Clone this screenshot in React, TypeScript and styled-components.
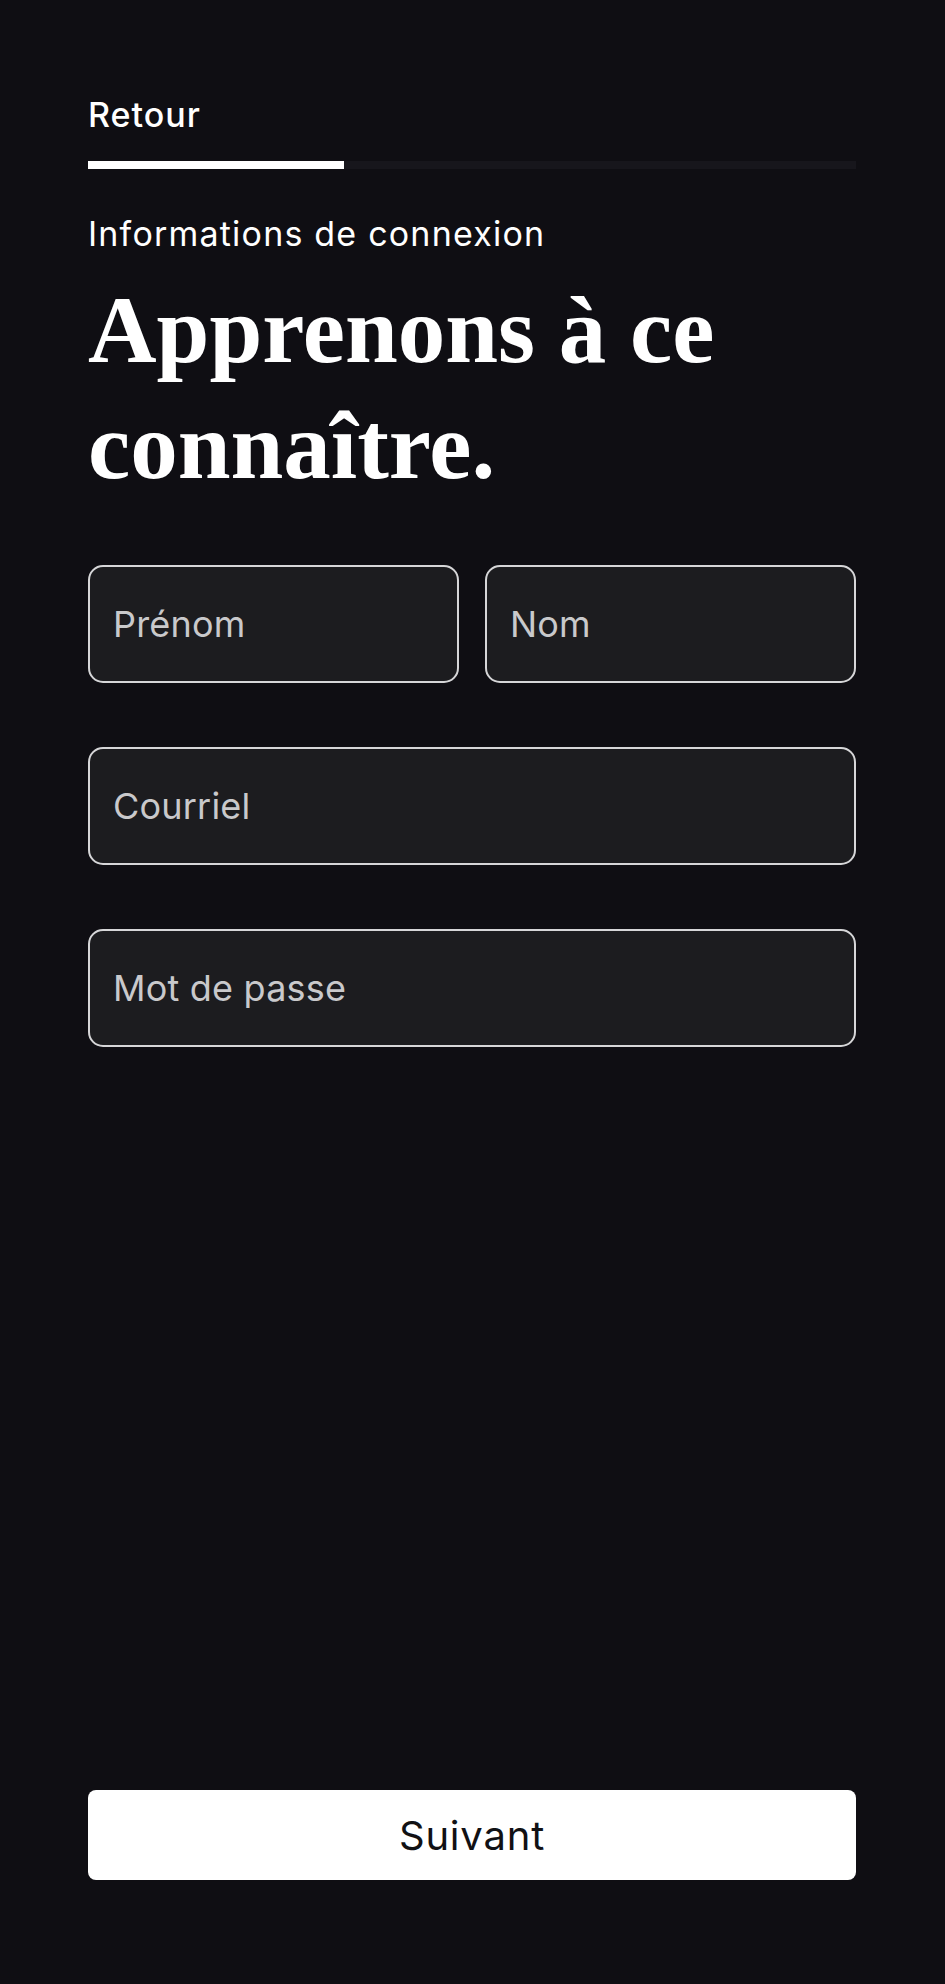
import styled, { createGlobalStyle } from 'styled-components'

const GlobalStyle = createGlobalStyle`
  html, body {
    margin: 0;
    padding: 0;
    background: #0f0e13;
  }
  * {
    box-sizing: border-box;
  }
`

const SANS = `Inter, "Open Sans", "Liberation Sans", sans-serif`
const SERIF = `"Liberation Serif", "DejaVu Serif", serif`

const Page = styled.div`
  display: flex;
  flex-direction: column;
  min-height: 1984px;
  padding: 95px 89px 104px 88px;
  background: #0f0e13;
  color: #ffffff;
  font-family: ${SANS};
`

const BackLink = styled.button`
  align-self: flex-start;
  padding: 0;
  border: none;
  background: none;
  color: #ffffff;
  font-family: ${SANS};
  font-size: 34px;
  line-height: 40px;
  letter-spacing: 1px;
  font-weight: 500;
  cursor: pointer;
`

const Progress = styled.div`
  margin-top: 26px;
  height: 8px;
  background: #17161c;
`

const ProgressFill = styled.div`
  height: 100%;
  background: #ffffff;
`

const Eyebrow = styled.p`
  margin: 45px 0 0;
  font-size: 34px;
  line-height: 40px;
  letter-spacing: 1.2px;
  font-weight: 400;
`

const Title = styled.h1`
  margin: 18px 0 0;
  font-family: ${SERIF};
  font-size: 95px;
  line-height: 116px;
  font-weight: 700;
`

const Fields = styled.div`
  display: flex;
  flex-direction: column;
  gap: 64px;
  margin-top: 61px;
`

const FieldRow = styled.div`
  display: grid;
  grid-template-columns: 1fr 1fr;
  gap: 26px;
`

const Field = styled.input`
  width: 100%;
  height: 118px;
  padding: 0 23px;
  border: 2px solid #d6d6d8;
  border-radius: 15px;
  background: #1c1c1f;
  color: #ffffff;
  font-family: ${SANS};
  font-size: 36px;
  letter-spacing: 0.2px;
  outline: none;

  &::placeholder {
    color: #c9c9cb;
    opacity: 1;
  }
`

const NextButton = styled.button`
  margin-top: auto;
  height: 90px;
  border: none;
  border-radius: 8px;
  background: #ffffff;
  color: #111114;
  font-family: ${SANS};
  font-size: 40px;
  letter-spacing: 0.8px;
  font-weight: 400;
  cursor: pointer;
`

export default function App() {
  const step = 1
  const totalSteps = 3

  return (
    <>
      <GlobalStyle />
      <Page>
        <BackLink type="button">Retour</BackLink>
        <Progress>
          <ProgressFill style={{ width: `${(step / totalSteps) * 100}%` }} />
        </Progress>
        <Eyebrow>Informations de connexion</Eyebrow>
        <Title>Apprenons à ce connaître.</Title>
        <Fields>
          <FieldRow>
            <Field type="text" placeholder="Prénom" />
            <Field type="text" placeholder="Nom" />
          </FieldRow>
          <Field type="email" placeholder="Courriel" />
          <Field type="password" placeholder="Mot de passe" />
        </Fields>
        <NextButton type="button">Suivant</NextButton>
      </Page>
    </>
  )
}
